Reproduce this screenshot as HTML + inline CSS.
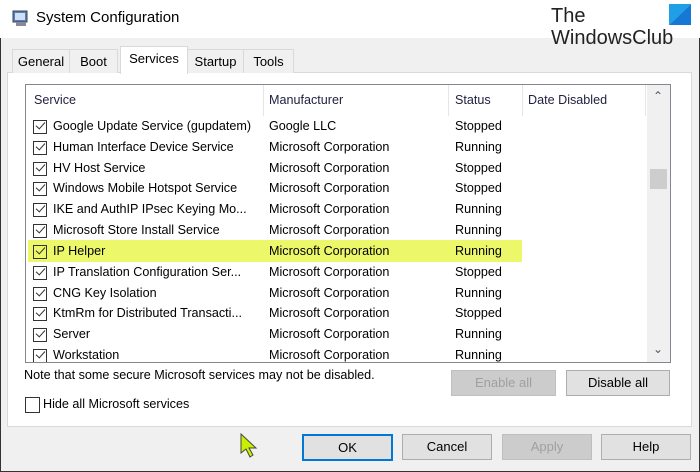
<!DOCTYPE html>
<html><head><style>
body{margin:0;width:700px;height:472px;overflow:hidden;background:#f0f0f0;font-family:"Liberation Sans",sans-serif;font-size:12.6px;color:#000;position:relative}
.a{position:absolute}
.title{left:0;top:0;width:700px;height:38px;background:#fff}
.tab{position:absolute;top:49px;height:23px;border:1px solid #d9d9d9;border-bottom:none;background:#f0f0f0;line-height:23px;text-align:center;font-size:13px}
.panel{left:7px;top:72px;width:683px;height:353px;background:#fff;border:1px solid #d9d9d9}
.list{left:25px;top:84px;width:644px;height:277px;border:1px solid #828790;background:#fff;overflow:hidden}
.hdr{position:absolute;top:0;height:31px;line-height:31px;color:#1f1f3f}
.sep{position:absolute;top:0;width:1px;height:31px;background:#e5e5e5}
.row{position:absolute;left:0;width:620px;height:21px;line-height:21px}
.row span{position:absolute}
.cb{position:absolute;left:7px;top:4px;width:12px;height:12px;border:1px solid #333}
.cb:after{content:"";position:absolute;left:2px;top:1px;width:8px;height:4px;border-left:1.2px solid #333;border-bottom:1.2px solid #333;transform:rotate(-48deg)}
.btn{position:absolute;height:24px;border:1px solid #adadad;background:#e1e1e1;text-align:center;line-height:24px;font-size:13px}
.dis{color:#a0a0a0;background:#cccccc;border-color:#bfbfbf}
</style></head><body>
<div class="a" style="left:0;top:0;width:700px;height:472px;border:1px solid #333;box-sizing:border-box"></div>
<div class="a title"></div>
<svg class="a" style="left:12px;top:10px" width="18" height="17"><rect x="1" y="1" width="14" height="11" fill="#5a7fb8" stroke="#345"/><rect x="3" y="3" width="10" height="7" fill="#cfe0f5"/><rect x="4" y="12" width="10" height="4" fill="#889"/></svg>
<div class="a" style="left:36px;top:9px;font-size:15px">System Configuration</div>
<div class="a" style="left:551px;top:5px;font-size:20px;line-height:22px;color:#222">The<br>WindowsClub</div>
<svg class="a" style="left:669px;top:4px" width="22" height="21"><polygon points="0,0 22,0 0,21" fill="#1fa0e6"/><polygon points="22,0 22,21 0,21" fill="#1578d4"/></svg>
<div class="a panel"></div>
<div class="tab" style="left:12px;width:56px">General</div>
<div class="tab" style="left:69px;width:47px">Boot</div>
<div class="tab" style="left:120px;top:46px;height:27px;width:66px;background:#fff">Services</div>
<div class="tab" style="left:187px;width:55px">Startup</div>
<div class="tab" style="left:243px;width:49px">Tools</div>
<div class="a list">
<div class="hdr" style="left:8px">Service</div>
<div class="sep" style="left:237px"></div>
<div class="hdr" style="left:243px">Manufacturer</div>
<div class="sep" style="left:422px"></div>
<div class="hdr" style="left:429px">Status</div>
<div class="sep" style="left:496px"></div>
<div class="hdr" style="left:502px">Date Disabled</div>
<div class="sep" style="left:619px"></div>
<div class="a" style="top:155px;height:22px;background:#ecf86a;left:2px;width:494px"></div>
<div class="row" style="top:31px"><div class="cb"></div><span style="left:27px">Google Update Service (gupdatem)</span><span style="left:243px">Google LLC</span><span style="left:429px">Stopped</span></div>
<div class="row" style="top:52px"><div class="cb"></div><span style="left:27px">Human Interface Device Service</span><span style="left:243px">Microsoft Corporation</span><span style="left:429px">Running</span></div>
<div class="row" style="top:73px"><div class="cb"></div><span style="left:27px">HV Host Service</span><span style="left:243px">Microsoft Corporation</span><span style="left:429px">Stopped</span></div>
<div class="row" style="top:93px"><div class="cb"></div><span style="left:27px">Windows Mobile Hotspot Service</span><span style="left:243px">Microsoft Corporation</span><span style="left:429px">Stopped</span></div>
<div class="row" style="top:114px"><div class="cb"></div><span style="left:27px">IKE and AuthIP IPsec Keying Mo...</span><span style="left:243px">Microsoft Corporation</span><span style="left:429px">Running</span></div>
<div class="row" style="top:135px"><div class="cb"></div><span style="left:27px">Microsoft Store Install Service</span><span style="left:243px">Microsoft Corporation</span><span style="left:429px">Running</span></div>
<div class="row" style="top:156px"><div class="cb"></div><span style="left:27px">IP Helper</span><span style="left:243px">Microsoft Corporation</span><span style="left:429px">Running</span></div>
<div class="row" style="top:177px"><div class="cb"></div><span style="left:27px">IP Translation Configuration Ser...</span><span style="left:243px">Microsoft Corporation</span><span style="left:429px">Stopped</span></div>
<div class="row" style="top:198px"><div class="cb"></div><span style="left:27px">CNG Key Isolation</span><span style="left:243px">Microsoft Corporation</span><span style="left:429px">Running</span></div>
<div class="row" style="top:218px"><div class="cb"></div><span style="left:27px">KtmRm for Distributed Transacti...</span><span style="left:243px">Microsoft Corporation</span><span style="left:429px">Stopped</span></div>
<div class="row" style="top:239px"><div class="cb"></div><span style="left:27px">Server</span><span style="left:243px">Microsoft Corporation</span><span style="left:429px">Running</span></div>
<div class="row" style="top:260px"><div class="cb"></div><span style="left:27px">Workstation</span><span style="left:243px">Microsoft Corporation</span><span style="left:429px">Running</span></div>
<div class="a" style="left:621px;top:0;width:23px;height:277px;background:#f0f0f0"></div>
<div class="a" style="left:627px;top:4px;font-size:12px;color:#555">&#8963;</div>
<div class="a" style="left:627px;top:257px;font-size:12px;color:#555">&#8964;</div>
<div class="a" style="left:624px;top:84px;width:17px;height:20px;background:#cdcdcd"></div>
</div>
<div class="a" style="left:24px;top:368px">Note that some secure Microsoft services may not be disabled.</div>
<div class="btn dis" style="left:451px;top:370px;width:103px">Enable all</div>
<div class="btn" style="left:566px;top:370px;width:102px">Disable all</div>
<div class="a" style="left:25px;top:397px;width:13px;height:14px;border:1px solid #333;background:#fff"></div>
<div class="a" style="left:43px;top:397px">Hide all Microsoft services</div>
<svg class="a" style="left:239px;top:433px" width="20" height="26"><polygon points="2,1 2,20 7,16 11,24 14,22 10,15 17,15" fill="#c8f000" stroke="#444" stroke-width="1"/></svg>
<div class="btn" style="left:302px;top:434px;width:87px;border:2px solid #0078d7;height:23px">OK</div>
<div class="btn" style="left:402px;top:434px;width:88px">Cancel</div>
<div class="btn dis" style="left:502px;top:434px;width:88px">Apply</div>
<div class="btn" style="left:601px;top:434px;width:88px">Help</div>
</body></html>
